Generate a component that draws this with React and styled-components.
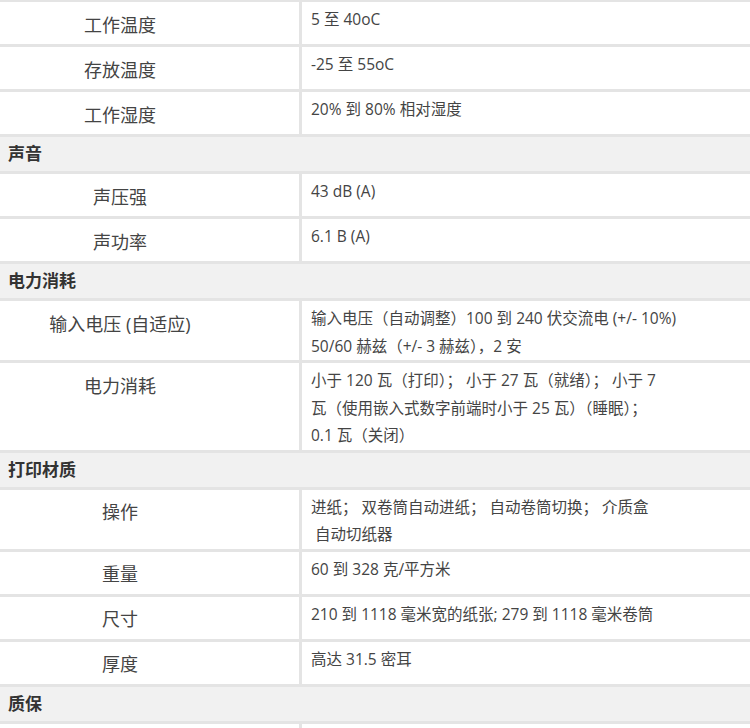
import React from 'react';
import styled, { createGlobalStyle } from 'styled-components';

const GlobalStyle = createGlobalStyle`
  html, body {
    margin: 0;
    padding: 0;
    background: #ffffff;
  }
  body {
    font-family: "Open Sans", "Noto Sans CJK SC", sans-serif;
    color: #444;
  }
`

// spec data, grouped by section (first group has no title, it was cut off above)
const sections = [
    {
        title: null,
        rows: [
            { name: '工作温度', value: ['5 至 40oC'] },
            { name: '存放温度', value: ['-25 至 55oC'] },
            { name: '工作湿度', value: ['20% 到 80% 相对湿度'] },
        ],
    },
    {
        title: '声音',
        rows: [
            { name: '声压强', value: ['43 dB (A)'] },
            { name: '声功率', value: ['6.1 B (A)'] },
        ],
    },
    {
        title: '电力消耗',
        rows: [
            {
                name: '输入电压 (自适应)',
                value: ['输入电压（自动调整）100 到 240 伏交流电 (+/- 10%)', '50/60 赫兹（+/- 3 赫兹），2 安'],
            },
            {
                name: '电力消耗',
                value: [
                    '小于 120 瓦（打印）； 小于 27 瓦（就绪）； 小于 7',
                    '瓦（使用嵌入式数字前端时小于 25 瓦）（睡眠）；',
                    '0.1 瓦（关闭）',
                ],
            },
        ],
    },
    {
        title: '打印材质',
        rows: [
            { name: '操作', value: ['进纸； 双卷筒自动进纸； 自动卷筒切换； 介质盒', '\u00a0自动切纸器'] },
            { name: '重量', value: ['60 到 328 克/平方米'] },
            { name: '尺寸', value: ['210 到 1118 毫米宽的纸张; 279 到 1118 毫米卷筒'] },
            { name: '厚度', value: ['高达 31.5 密耳'] },
        ],
    },
    {
        title: '质保',
        rows: [],
    },
]

function SpecTable() {
    return (
        <Table>
            {sections.map((section, i) => (
                <React.Fragment key={i}>
                    {section.title && <SectionHeader>{section.title}</SectionHeader>}
                    {section.rows.map(row => (
                        <Row key={row.name}>
                            <NameCell>{row.name}</NameCell>
                            <ValueCell>
                                {row.value.map((line, j) => (
                                    <Line key={j}>{line}</Line>
                                ))}
                            </ValueCell>
                        </Row>
                    ))}
                </React.Fragment>
            ))}
            <Row>
                <NameCell />
                <ValueCell />
            </Row>
        </Table>
    )
}

export default function App() {
    return (
        <>
            <GlobalStyle />
            <Page>
                <SpecTable />
            </Page>
        </>
    )
}


///// Styling /////
const Page = styled.div`
  width: 750px;
  height: 728px;
  overflow: hidden;
`
const Table = styled.div`
  display: flex;
  flex-direction: column;
  gap: 3px;
  padding-top: 2px;
  background-color: #e4e4e4;
`
const SectionHeader = styled.div`
  height: 34px;
  line-height: 34px;
  padding-left: 8px;
  background-color: #f1f1f1;
  font-size: 17px;
  font-weight: bold;
  color: #333;
`
const Row = styled.div`
  display: grid;
  grid-template-columns: 299px 1fr;
  column-gap: 3px;
`
const NameCell = styled.div`
  background-color: #ffffff;
  padding: 8.5px 59px 5.5px 0;
  min-height: 28px;
  line-height: 28px;
  font-size: 18px;
  text-align: center;
  color: #444;
`
const ValueCell = styled.div`
  background-color: #ffffff;
  padding: 4px 9px 0 9px;
  font-size: 15.5px;
  line-height: 27.5px;
  color: #444;
`
const Line = styled.div`
  white-space: nowrap;
`
